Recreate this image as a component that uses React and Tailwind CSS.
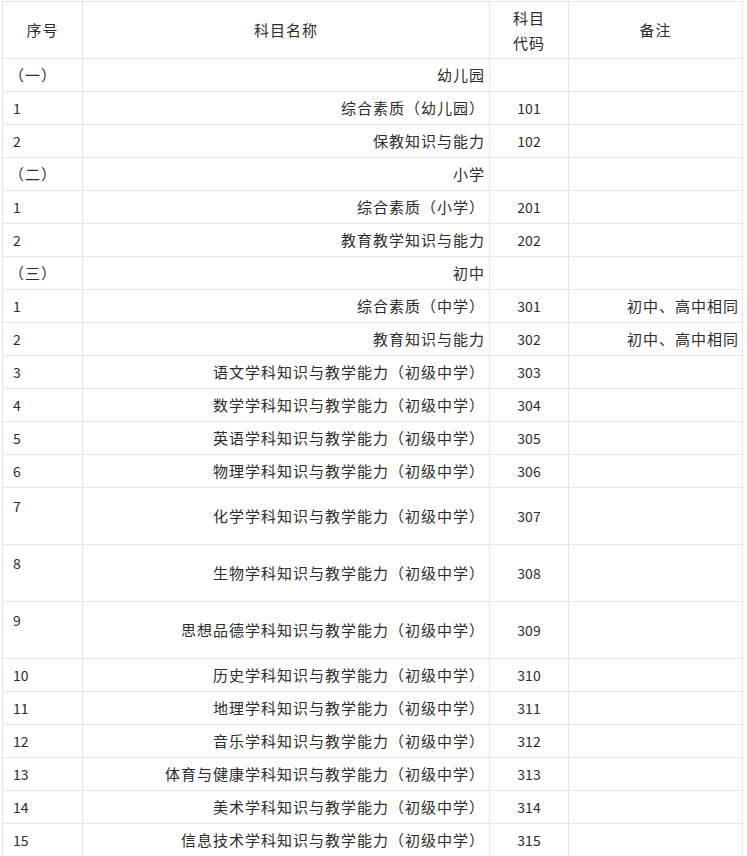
import React from "react";

const rows = [
  { no: "（一）", name: "幼儿园", group: true },
  { no: "1", name: "综合素质（幼儿园）", code: "101" },
  { no: "2", name: "保教知识与能力", code: "102" },
  { no: "（二）", name: "小学", group: true },
  { no: "1", name: "综合素质（小学）", code: "201" },
  { no: "2", name: "教育教学知识与能力", code: "202" },
  { no: "（三）", name: "初中", group: true },
  { no: "1", name: "综合素质（中学）", code: "301", note: "初中、高中相同" },
  { no: "2", name: "教育知识与能力", code: "302", note: "初中、高中相同" },
  { no: "3", name: "语文学科知识与教学能力（初级中学）", code: "303" },
  { no: "4", name: "数学学科知识与教学能力（初级中学）", code: "304" },
  { no: "5", name: "英语学科知识与教学能力（初级中学）", code: "305" },
  { no: "6", name: "物理学科知识与教学能力（初级中学）", code: "306" },
  { no: "7", name: "化学学科知识与教学能力（初级中学）", code: "307", tall: true },
  { no: "8", name: "生物学科知识与教学能力（初级中学）", code: "308", tall: true },
  { no: "9", name: "思想品德学科知识与教学能力（初级中学）", code: "309", tall: true },
  { no: "10", name: "历史学科知识与教学能力（初级中学）", code: "310" },
  { no: "11", name: "地理学科知识与教学能力（初级中学）", code: "311" },
  { no: "12", name: "音乐学科知识与教学能力（初级中学）", code: "312" },
  { no: "13", name: "体育与健康学科知识与教学能力（初级中学）", code: "313" },
  { no: "14", name: "美术学科知识与教学能力（初级中学）", code: "314" },
  { no: "15", name: "信息技术学科知识与教学能力（初级中学）", code: "315" },
];

const cell = "border border-[#e3e7eb] p-0";

export default function App() {
  return (
    <div
      className="bg-white pt-px pl-[2px] text-[#2b2b2b] text-[15px] tracking-[1px]"
      style={{ fontFamily: '"Noto Sans CJK SC", "Noto Sans", sans-serif' }}
    >
      <div className="w-[741px] border-r border-[#e3e7eb]">
        <table className="border-collapse table-fixed w-[740px]">
          <colgroup>
            <col className="w-[80px]" />
            <col className="w-[407px]" />
            <col className="w-[79px]" />
            <col className="w-[174px]" />
          </colgroup>
          <thead>
            <tr className="h-[57px]">
              <th className={`${cell} font-normal text-center`}>序号</th>
              <th className={`${cell} font-normal text-center`}>科目名称</th>
              <th className={`${cell} font-normal text-center leading-[25px]`}>
                科目
                <br />
                代码
              </th>
              <th className={`${cell} font-normal text-center`}>备注</th>
            </tr>
          </thead>
          <tbody>
            {rows.map((r, i) => (
              <tr key={i} className={r.tall ? "h-[57px]" : "h-[33px]"}>
                <td
                  className={`${cell} ${
                    r.tall ? "align-top pt-[8px]" : "align-middle"
                  } ${r.group ? "pl-[6px]" : "pl-[10px] text-[14px] tracking-normal"}`}
                >
                  {r.no}
                </td>
                <td className={`${cell} text-right pr-[4px]`}>{r.name}</td>
                <td className={`${cell} text-center text-[14px] tracking-normal`}>
                  {r.code}
                </td>
                <td className={`${cell} text-right pr-[3px]`}>{r.note}</td>
              </tr>
            ))}
          </tbody>
        </table>
      </div>
    </div>
  );
}
